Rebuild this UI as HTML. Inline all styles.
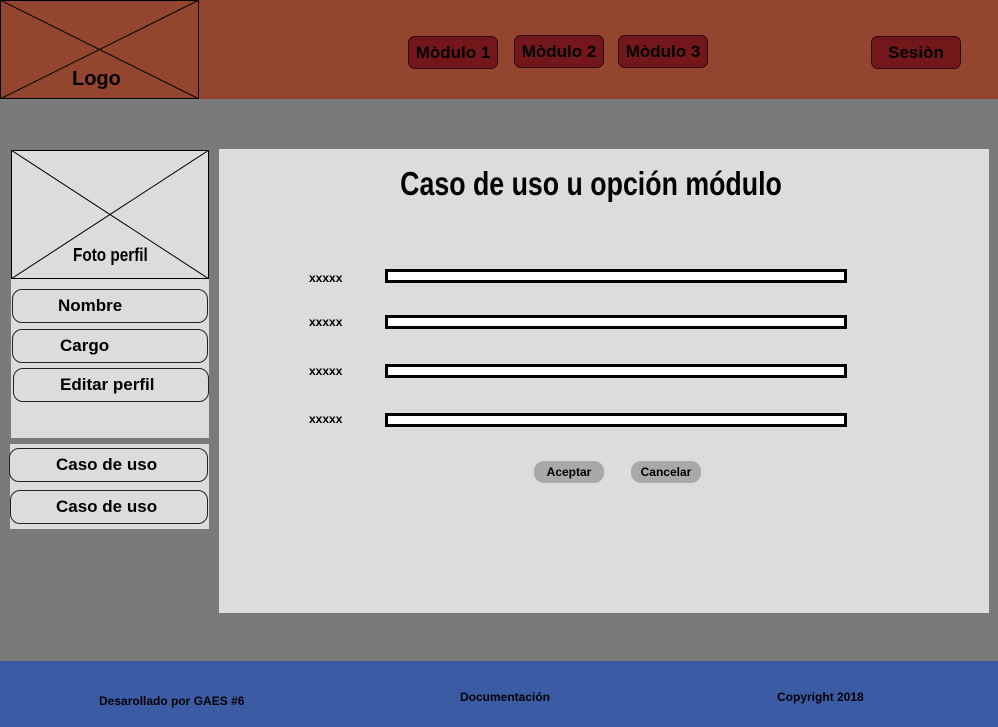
<!DOCTYPE html>
<html><head><meta charset="utf-8"><style>
*{margin:0;padding:0;box-sizing:border-box}
body{width:998px;height:727px;background:#7a7a7a;position:relative;overflow:hidden;font-family:"Liberation Sans",sans-serif;font-weight:bold;color:#000}
.a{position:absolute}
.hdr{left:0;top:0;width:998px;height:99px;background:#93452f}
.nav{height:33px;background:#73171a;border:1px solid #2a0a0a;border-radius:7px;font-size:17px;text-align:center;line-height:31px}
.side{background:#dcdcdc}
.btn{border:1px solid #222;border-radius:10px;font-size:17px;height:34px;line-height:32px;background:#dcdcdc}
.inp{left:385px;width:462px;height:14px;border:3px solid #000;background:#fff}
.lbl{left:309px;font-size:12px}
.sb{background:#a9a9a9;border-radius:10px;height:22px;width:70px;font-size:12px;text-align:center;line-height:22px}
.ft{left:0;top:661px;width:998px;height:66px;background:#3b5ba5;font-size:12px}
</style></head><body>
<div class="a hdr"></div>
<svg class="a" style="left:0;top:0" width="200" height="99"><rect x="0.5" y="0.5" width="198" height="98" fill="none" stroke="#000"/><line x1="0" y1="0" x2="199" y2="99" stroke="#000"/><line x1="199" y1="0" x2="0" y2="99" stroke="#000"/></svg>
<div class="a" style="left:72px;top:68px;font-size:20px">Logo</div>
<div class="a nav" style="left:408px;top:36px;width:90px">Mòdulo 1</div>
<div class="a nav" style="left:514px;top:35px;width:90px">Mòdulo 2</div>
<div class="a nav" style="left:618px;top:35px;width:90px">Mòdulo 3</div>
<div class="a nav" style="left:871px;top:36px;width:90px">Sesiòn</div>

<div class="a side" style="left:11px;top:150px;width:198px;height:288px"></div>
<svg class="a" style="left:11px;top:150px" width="198" height="129"><rect x="0.5" y="0.5" width="197" height="128" fill="#dcdcdc" stroke="#000"/><line x1="0" y1="0" x2="198" y2="129" stroke="#000"/><line x1="198" y1="0" x2="0" y2="129" stroke="#000"/></svg>
<div class="a" style="left:73px;top:245px;font-size:18px;transform:scaleX(0.85);transform-origin:left">Foto perfil</div>
<div class="a btn" style="left:12px;top:289px;width:196px;padding-left:45px">Nombre</div>
<div class="a btn" style="left:12px;top:329px;width:196px;padding-left:47px">Cargo</div>
<div class="a btn" style="left:13px;top:368px;width:196px;padding-left:46px">Editar perfil</div>

<div class="a side" style="left:10px;top:444px;width:199px;height:85px"></div>
<div class="a btn" style="left:9px;top:448px;width:199px;padding-left:46px">Caso de uso</div>
<div class="a btn" style="left:10px;top:490px;width:198px;padding-left:45px">Caso de uso</div>

<div class="a side" style="left:219px;top:149px;width:770px;height:464px"></div>
<div class="a" style="left:591px;top:165px;width:0;white-space:nowrap;font-size:33px"><span style="display:inline-block;transform:translateX(-50%) scaleX(0.81)">Caso de uso u opción módulo</span></div>
<div class="a lbl" style="top:271px">xxxxx</div><div class="a inp" style="top:269px"></div>
<div class="a lbl" style="top:315px">xxxxx</div><div class="a inp" style="top:315px"></div>
<div class="a lbl" style="top:364px">xxxxx</div><div class="a inp" style="top:364px"></div>
<div class="a lbl" style="top:412px">xxxxx</div><div class="a inp" style="top:413px"></div>
<div class="a sb" style="left:534px;top:461px">Aceptar</div>
<div class="a sb" style="left:631px;top:461px">Cancelar</div>

<div class="a ft"></div>
<div class="a" style="left:99px;top:694px;font-size:12px">Desarollado por GAES #6</div>
<div class="a" style="left:460px;top:690px;font-size:12px">Documentación</div>
<div class="a" style="left:777px;top:690px;font-size:12px">Copyright 2018</div>
</body></html>
